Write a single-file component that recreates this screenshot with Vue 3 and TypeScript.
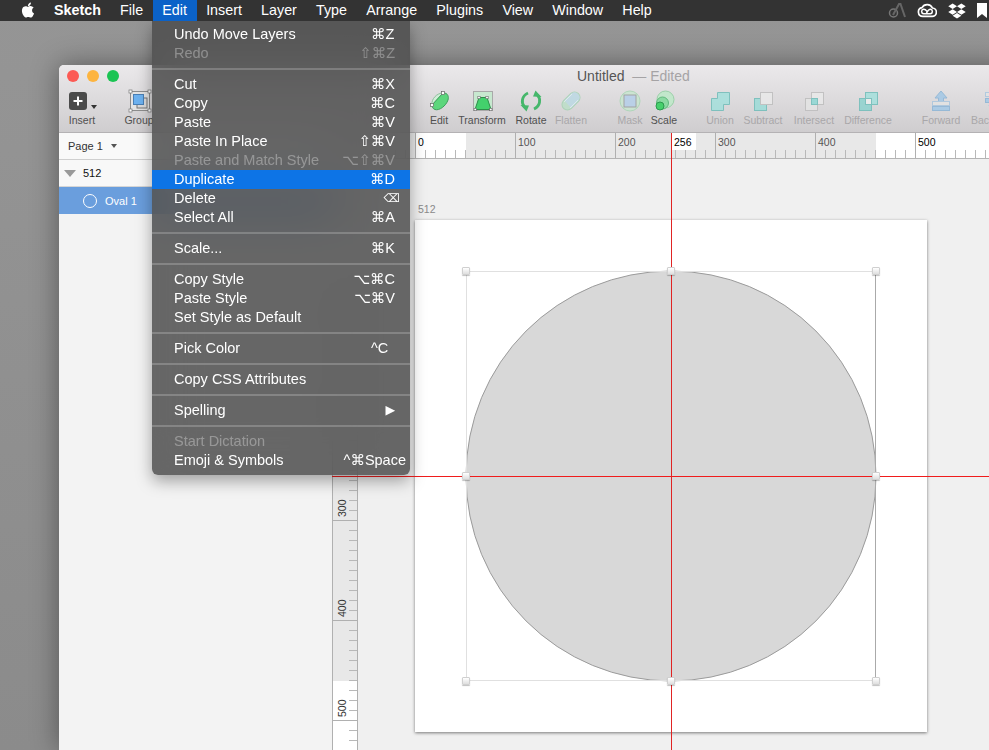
<template>
  <div class="desktop">
    <!-- window sits behind the menu bar, cut off by the right edge -->
    <div class="window">
      <div class="toolbar">
        <div class="titlebar">
          <span class="light red"></span>
          <span class="light yellow"></span>
          <span class="light green"></span>
          <div class="title">Untitled <span class="edited">&nbsp;—&nbsp;Edited</span></div>
        </div>
        <div class="tools">
          <div
            v-for="t in tools"
            :key="t.label"
            class="tool"
            :class="{ off: t.off }"
            :style="{ width: t.w + 'px', marginLeft: (t.ml || 0) + 'px' }"
          >
            <svg class="tool-icon" width="22" height="22" viewBox="0 0 22 22">
              <template v-if="t.icon === 'insert'">
                <rect x="-2" y="2" width="18" height="18" rx="3" fill="#4b4b4b" />
                <path d="M7 6.500v9M2.500 11h9" stroke="#fff" stroke-width="2" />
              </template>
              <template v-else-if="t.icon === 'group'">
                <rect x="2.500" y="1.500" width="19" height="19" fill="#e4e4e4" stroke="#8d8d8d" />
                <rect x="9" y="8" width="10" height="10" fill="#dcdcdc" stroke="#777" />
                <rect x="5.500" y="4.500" width="10" height="10" fill="#6db2f0" stroke="#4a7fb5" />
                <g fill="#fff" stroke="#777" stroke-width=".7">
                  <rect x="1" y="0" width="3" height="3" />
                  <rect x="20" y="0" width="3" height="3" />
                  <rect x="1" y="19" width="3" height="3" />
                  <rect x="20" y="19" width="3" height="3" />
                </g>
              </template>
              <template v-else-if="t.icon === 'edit'">
                <path d="M4 15C3 9 9 3 15 3z" fill="#cfeed7" stroke="#8fbf9c" />
                <path d="M4 15 15 3c5-.5 6 4 5 7-2 6-9 11-13 9.500-2-.5-3-2.500-3-4.500z" fill="#5cd67c" stroke="#3d9f5b" />
                <rect x="2.500" y="13.500" width="3" height="3" fill="#fff" stroke="#666" stroke-width=".7" />
                <rect x="13.500" y="1.500" width="3" height="3" fill="#fff" stroke="#666" stroke-width=".7" />
              </template>
              <template v-else-if="t.icon === 'transform'">
                <rect x="2.500" y="1.500" width="19" height="19" fill="#c7e8cf" stroke="#a9a9a9" />
                <path d="M8 7.500h8l4 12H4z" fill="#43d16c" stroke="#2c8f48" />
                <g fill="#fff" stroke="#666" stroke-width=".6">
                  <rect x="6.800" y="6.300" width="2.400" height="2.400" />
                  <rect x="14.800" y="6.300" width="2.400" height="2.400" />
                  <rect x="3" y="18.300" width="2.400" height="2.400" />
                  <rect x="18.600" y="18.300" width="2.400" height="2.400" />
                </g>
              </template>
              <template v-else-if="t.icon === 'rotate'">
                <g fill="none" stroke="#46b76b" stroke-width="2.800">
                  <path d="M8 3C1.500 6 1 13 4.500 17" />
                  <path d="M14 19c6.500-3 7-10 3.500-14" />
                </g>
                <path d="M.5 15 9 15.500 6.500 21.500zM21.500 7 13 6.500 15.500.5z" fill="#46b76b" />
              </template>
              <template v-else-if="t.icon === 'flatten'">
                <rect x="0.500" y="5.500" width="21" height="11" rx="5.500" fill="#bcdfc8" stroke="#a6d2b3" transform="rotate(-45 11 11)" />
                <path d="M4.500 10.500 11.500 3.500a5 5 0 0 1 7 7L11 18z" fill="#bcd9e4" />
                <path d="M4 12 12 4M10 18l8-8" stroke="#fff" stroke-opacity=".5" />
              </template>
              <template v-else-if="t.icon === 'mask'">
                <circle cx="11" cy="11" r="10" fill="#c9e6d0" stroke="#a9d6b5" />
                <rect x="5" y="5" width="12" height="12" fill="#b5cfea" stroke="#999" />
              </template>
              <template v-else-if="t.icon === 'scale'">
                <circle cx="12.500" cy="9.500" r="8.500" fill="#c2e7cb" stroke="#9bd0a9" />
                <circle cx="9.500" cy="13" r="6" fill="#8bdaa2" stroke="#60b87c" />
                <circle cx="7" cy="16" r="4" fill="#46d06c" stroke="#2c9a4e" />
              </template>
              <template v-else-if="t.icon === 'union'">
                <path d="M8.500 2.500h12v12h-6v6h-12v-12h6z" fill="#a4e0dc" stroke="#6fbdb9" />
              </template>
              <template v-else-if="t.icon === 'subtract'">
                <rect x="2.500" y="8.500" width="12" height="12" fill="#9cdcd8" stroke="#6fbdb9" />
                <rect x="8.500" y="2.500" width="12" height="12" fill="#e9e9e9" stroke="#bdbdbd" />
              </template>
              <template v-else-if="t.icon === 'intersect'">
                <rect x="2.500" y="8.500" width="12" height="12" fill="#e4e4e4" stroke="#bdbdbd" />
                <rect x="8.500" y="2.500" width="12" height="12" fill="#e9e9e9" stroke="#bdbdbd" />
                <rect x="8.500" y="8.500" width="6" height="6" fill="#8fd8d4" stroke="#6fbdb9" />
              </template>
              <template v-else-if="t.icon === 'difference'">
                <rect x="2.500" y="8.500" width="12" height="12" fill="#8fd3cf" stroke="#6fbdb9" />
                <rect x="8.500" y="2.500" width="12" height="12" fill="#a4e0dc" stroke="#6fbdb9" />
                <rect x="8.500" y="8.500" width="6" height="6" fill="#eee" stroke="#6fbdb9" />
              </template>
              <template v-else-if="t.icon === 'forward'">
                <path d="M11 1 5 8h3.500v4h5V8H17z" fill="#a3c8e6" stroke="#8bb4d6" />
                <rect x="2.500" y="11.500" width="17" height="4" fill="#e3e3e3" stroke="#a9c6de" />
                <rect x="2.500" y="16.500" width="17" height="4" fill="#a3c8e6" stroke="#8bb4d6" />
              </template>
              <template v-else>
                <rect x="2.500" y="2.500" width="17" height="4" fill="#e3e3e3" stroke="#a9c6de" />
                <rect x="2.500" y="8.500" width="17" height="4" fill="#a3c8e6" stroke="#8bb4d6" />
                <path d="M11 21l6-6H5z" fill="#a3c8e6" />
              </template>
            </svg>
            <span v-if="t.icon === 'insert'" class="caret"></span>
            <span class="tool-label">{{ t.label }}</span>
          </div>
        </div>
      </div>

      <div class="body">
        <aside class="sidebar">
          <div class="page-row">Page 1 <span class="page-caret"></span></div>
          <div class="layer-group"><span class="disclosure"></span>512</div>
          <div class="layer-row"><span class="oval-glyph"></span>Oval 1</div>
        </aside>

        <main class="main">
          <div class="h-ruler">
            <span class="h-white" style="left: 83px; width: 51px"></span>
            <span class="h-white" style="left: 544px; width: 120px"></span>
            <span class="h-white short" style="left: 339px; width: 25px"></span>
            <span
              v-for="v in hTicks"
              :key="v"
              class="h-tick"
              :class="{ major: v % 100 === 0 }"
              :style="{ left: 83 + v + 'px' }"
            ></span>
            <span
              v-for="l in hLabels"
              :key="l.text"
              class="h-label"
              :class="{ dark: l.dark }"
              :style="{ left: 83 + l.v + 3 + 'px' }"
            >{{ l.text }}</span>
          </div>
          <div class="canvas-row">
            <div class="v-ruler">
              <span class="v-white" style="top: 61px; height: 51px"></span>
              <span class="v-white" style="top: 522px; height: 80px"></span>
              <span
                v-for="v in vTicks"
                :key="v"
                class="v-tick"
                :class="{ major: v % 100 === 0 }"
                :style="{ top: 61 + v + 'px' }"
              ></span>
              <span
                v-for="v in vLabels"
                :key="v"
                class="v-label"
                :style="{ top: 61 + v - 3 + 'px' }"
              >{{ v }}</span>
            </div>
            <div class="canvas">
              <div class="artboard-name">512</div>
              <div class="artboard">
                <svg class="oval" width="512" height="512" viewBox="0 0 512 512">
                  <circle cx="256" cy="256" r="205" fill="#d8d8d8" stroke="#9b9b9b" />
                </svg>
                <div class="selection"></div>
                <span
                  v-for="h in handles"
                  :key="h.x + '-' + h.y"
                  class="handle"
                  :style="{ left: h.x - 4 + 'px', top: h.y - 4 + 'px' }"
                ></span>
              </div>
            </div>
          </div>
          <div class="guide-h"></div>
          <div class="guide-v"></div>
        </main>
      </div>
    </div>

    <header class="menubar">
      <svg class="apple" width="18" height="18" viewBox="0 0 24 24">
        <path fill="#fff" d="M18.71 19.5c-.83 1.24-1.71 2.45-3.05 2.47-1.34.03-1.77-.79-3.29-.79-1.53 0-2 .77-3.27.82-1.31.05-2.3-1.32-3.14-2.53C4.25 17 2.94 12.45 4.7 9.39c.87-1.52 2.43-2.48 4.12-2.51 1.28-.02 2.5.87 3.29.87.78 0 2.26-1.07 3.81-.91.65.03 2.47.26 3.64 1.98-.09.06-2.17 1.28-2.15 3.81.03 3.02 2.65 4.03 2.68 4.04-.03.07-.42 1.44-1.38 2.83M13 3.500c.73-.83 1.94-1.46 2.94-1.5.13 1.17-.34 2.35-1.04 3.19-.69.85-1.83 1.51-2.95 1.42-.15-1.15.41-2.35 1.05-3.11z" />
      </svg>
      <span
        v-for="m in menus"
        :key="m"
        class="menu-title"
        :class="{ app: m === 'Sketch', active: m === 'Edit' }"
      >{{ m }}</span>
      <div class="status">
        <svg width="18" height="15" viewBox="0 0 18 15">
          <circle cx="5.500" cy="10" r="4" fill="none" stroke="#777" stroke-width="1.500" />
          <path d="M5 12 11 1h1.500L17 14" fill="none" stroke="#666" stroke-width="2" />
        </svg>
        <svg width="20" height="15" viewBox="0 0 24 17">
          <path d="M7 15.500a5.300 5.300 0 0 1-1-10.500A7 7 0 0 1 18.500 5.500 5 5 0 0 1 18 15.500z" fill="none" stroke="#fff" stroke-width="2" />
          <path d="M12 9.500c-1.500-2-3-2.800-4.300-2.500a2.800 2.800 0 0 0 .3 5.500h8a2.800 2.800 0 0 0 .3-5.500c-2-.3-3.500 2-5 4.500" fill="none" stroke="#fff" stroke-width="1.800" />
        </svg>
        <svg width="18" height="16" viewBox="0 0 24 22">
          <path fill="#fff" d="M6 .8 0 4.600l6 3.800 6-3.800zM18 .8l-6 3.800 6 3.800 6-3.800zM0 12.300l6 3.800 6-3.800-6-3.800zM18 8.500l-6 3.800 6 3.800 6-3.800zM6 17.400l6 3.800 6-3.800-6-3.800z" />
        </svg>
        <svg class="mark" width="10" height="15" viewBox="0 0 10 15">
          <path fill="#fff" d="M0 0h10v15L5 11l-5 4z" />
        </svg>
      </div>
    </header>

    <!-- Edit menu, frosted over whatever sits behind it -->
    <div class="menu">
      <template v-for="(item, i) in editMenu" :key="i">
        <div v-if="item.sep" class="sep"></div>
        <div
          v-else
          class="item"
          :class="{ off: item.off, hot: item.hot, wide: item.wide }"
        >
          <span>{{ item.label }}</span>
          <span class="keys" :class="item.glyph">{{ item.keys }}</span>
        </div>
      </template>
    </div>
  </div>
</template>

<script setup lang="ts">
interface Tool { label: string; icon: string; w: number; ml?: number; off?: boolean }
interface MenuItem { label?: string; keys?: string; off?: boolean; hot?: boolean; wide?: boolean; sep?: boolean; glyph?: string }

const menus = ['Sketch', 'File', 'Edit', 'Insert', 'Layer', 'Type', 'Arrange', 'Plugins', 'View', 'Window', 'Help']

const tools: Tool[] = [
  { label: 'Insert', icon: 'insert', w: 40, ml: 3 },
  { label: 'Group', icon: 'group', w: 42, ml: 16 },
  { label: 'Edit', icon: 'edit', w: 28, ml: 265 },
  { label: 'Transform', icon: 'transform', w: 58 },
  { label: 'Rotate', icon: 'rotate', w: 40 },
  { label: 'Flatten', icon: 'flatten', w: 40, off: true },
  { label: 'Mask', icon: 'mask', w: 36, ml: 21, off: true },
  { label: 'Scale', icon: 'scale', w: 32 },
  { label: 'Union', icon: 'union', w: 40, ml: 20, off: true },
  { label: 'Subtract', icon: 'subtract', w: 46, off: true },
  { label: 'Intersect', icon: 'intersect', w: 56, off: true },
  { label: 'Difference', icon: 'difference', w: 52, off: true },
  { label: 'Forward', icon: 'forward', w: 52, ml: 21, off: true },
  { label: 'Backward', icon: 'backward', w: 54, off: true },
]

const editMenu: MenuItem[] = [
  { label: 'Undo Move Layers', keys: '⌘Z' },
  { label: 'Redo', keys: '⇧⌘Z', off: true },
  { sep: true },
  { label: 'Cut', keys: '⌘X' },
  { label: 'Copy', keys: '⌘C' },
  { label: 'Paste', keys: '⌘V' },
  { label: 'Paste In Place', keys: '⇧⌘V' },
  { label: 'Paste and Match Style', keys: '⌥⇧⌘V', off: true },
  { label: 'Duplicate', keys: '⌘D', hot: true },
  { label: 'Delete', keys: '⌫', glyph: 'del' },
  { label: 'Select All', keys: '⌘A' },
  { sep: true },
  { label: 'Scale...', keys: '⌘K' },
  { sep: true },
  { label: 'Copy Style', keys: '⌥⌘C' },
  { label: 'Paste Style', keys: '⌥⌘V' },
  { label: 'Set Style as Default' },
  { sep: true },
  { label: 'Pick Color', keys: '^C' },
  { sep: true },
  { label: 'Copy CSS Attributes' },
  { sep: true },
  { label: 'Spelling', keys: '▶', glyph: 'arrow' },
  { sep: true },
  { label: 'Start Dictation', off: true },
  { label: 'Emoji & Symbols', keys: '^⌘Space', wide: true },
]

const range = (from: number, to: number) => {
  const out: number[] = []
  for (let v = from; v <= to; v += 10) out.push(v)
  return out
}

const hTicks = range(-80, 570)
const vTicks = range(-60, 530)
const vLabels = [0, 100, 200, 300, 400, 500]
const hLabels = [
  { v: 0, text: '0', dark: true },
  { v: 100, text: '100' },
  { v: 200, text: '200' },
  { v: 256, text: '256', dark: true },
  { v: 300, text: '300' },
  { v: 400, text: '400' },
  { v: 500, text: '500', dark: true },
]

// selection handles, in artboard coordinates
const handles = [51, 256, 461].flatMap((y) =>
  [51, 256, 461].filter((x) => !(x === 256 && y === 256)).map((x) => ({ x, y }))
)
</script>

<style>
html,
body {
  margin: 0;
  overflow: hidden;
}
</style>

<style scoped>
.desktop {
  position: relative;
  width: 989px;
  height: 750px;
  overflow: hidden;
  background: linear-gradient(180deg, #959595, #8b8b8b);
  font-family: "Liberation Sans", "DejaVu Sans", sans-serif;
}

/* menu bar */
.menubar {
  position: absolute;
  z-index: 5;
  top: 0;
  left: 0;
  right: 0;
  height: 21px;
  display: flex;
  align-items: center;
  background: #333;
  color: #fff;
  font-size: 14.3px;
}
.apple {
  margin: -1px 7.400px 0 19px;
}
.menu-title {
  height: 21px;
  line-height: 21px;
  padding: 0 9.600px;
}
.menu-title.app {
  font-weight: 700;
}
.menu-title.active {
  background: #0b62c8;
}
.status {
  margin-left: auto;
  display: flex;
  align-items: center;
  gap: 11px;
  padding-right: 2px;
}
.status svg {
  display: block;
}

/* edit menu */
.menu {
  position: absolute;
  z-index: 4;
  top: 21px;
  left: 152px;
  width: 258px;
  height: 454px;
  box-sizing: border-box;
  padding-top: 4px;
  border-radius: 0 0 6px 6px;
  background: rgba(75, 75, 75, 0.84);
  backdrop-filter: blur(24px);
  box-shadow: 0 6px 16px rgba(0, 0, 0, 0.35);
  color: #fff;
  font-size: 14.5px;
}
.item {
  height: 19px;
  line-height: 19px;
  display: flex;
  justify-content: space-between;
  padding: 0 15px 0 22px;
  white-space: nowrap;
}
.item.wide {
  padding-right: 4px;
}
.item.off {
  color: rgba(255, 255, 255, 0.32);
}
.item.hot {
  background: #0d74e6;
}
.keys {
  min-width: 24px;
  text-align: left;
}
.keys.del {
  min-width: 0;
  margin-right: -5px;
  font-size: 11.500px;
}
.keys.arrow {
  min-width: 0;
  font-size: 12.500px;
}
.sep {
  height: 2px;
  margin: 5px 0;
  background: rgba(255, 255, 255, 0.2);
}

/* window */
.window {
  position: absolute;
  top: 65px;
  left: 59px;
  width: 960px;
  bottom: 0;
  border-radius: 5px 5px 0 0;
  overflow: hidden;
  box-shadow: 0 0 28px rgba(0, 0, 0, 0.4);
  display: flex;
  flex-direction: column;
  background: #f0f0f0;
}
.toolbar {
  height: 68px;
  box-sizing: border-box;
  border-bottom: 1px solid #b4b2b4;
  background: linear-gradient(180deg, #ebe9eb, #cfcdcf);
}
.titlebar {
  height: 22px;
  display: flex;
  align-items: center;
  gap: 8px;
  padding-left: 8px;
}
.light {
  width: 12px;
  height: 12px;
  border-radius: 50%;
}
.red {
  background: #fc5a54;
}
.yellow {
  background: #fdb43f;
}
.green {
  background: #1bc453;
}
.title {
  margin-left: 450px;
  font-size: 14px;
  color: #555;
}
.edited {
  color: #a5a3a5;
}
.tools {
  display: flex;
  padding-top: 3px;
}
.tool {
  position: relative;
  flex: none;
  display: flex;
  flex-direction: column;
  align-items: center;
  color: #505050;
}
.tool.off {
  color: #a9a7a9;
}
.tool-icon {
  display: block;
  overflow: visible;
}
.tool.off .tool-icon {
  opacity: 0.85;
}
.tool-label {
  margin-top: 2px;
  font-size: 10.500px;
  line-height: 13px;
  white-space: nowrap;
}
.caret {
  position: absolute;
  left: 29px;
  top: 15px;
  border: 3px solid transparent;
  border-top: 4px solid #333;
  border-bottom: 0;
}

.body {
  flex: 1;
  display: flex;
  min-height: 0;
}

/* layer list */
.sidebar {
  flex: none;
  width: 273px;
  background: #f3f3f3;
  font-size: 11px;
}
.page-row {
  height: 26px;
  display: flex;
  align-items: center;
  padding-left: 9px;
  background: #f9f9f9;
  border-bottom: 1px solid #cfcfcf;
  color: #333;
}
.page-caret {
  margin-left: 8px;
  border: 3px solid transparent;
  border-top: 4px solid #555;
  border-bottom: 0;
}
.layer-group {
  height: 27px;
  box-sizing: border-box;
  display: flex;
  align-items: center;
  padding-left: 5px;
  background: #f8f8f8;
  border-bottom: 1px solid #d6d6d6;
  color: #111;
}
.disclosure {
  margin-right: 7px;
  border-left: 6px solid transparent;
  border-right: 6px solid transparent;
  border-top: 7px solid #9a9a9a;
}
.layer-row {
  height: 27px;
  display: flex;
  align-items: center;
  padding-left: 24px;
  background: #6a9edd;
  color: #fff;
}
.oval-glyph {
  width: 12px;
  height: 12px;
  margin-right: 8px;
  border: 1px solid #fff;
  border-radius: 50%;
}

/* rulers and canvas */
.main {
  position: relative;
  flex: 1;
  min-width: 0;
  display: flex;
  flex-direction: column;
}
.h-ruler {
  position: relative;
  flex: none;
  height: 26px;
  box-sizing: border-box;
  border-bottom: 1px solid #b4b4b4;
  background: #e8e8e8;
  overflow: hidden;
}
.h-white {
  position: absolute;
  top: 0;
  bottom: 0;
  background: #fff;
}
.h-white.short {
  bottom: 8px;
}
.h-tick {
  position: absolute;
  bottom: 0;
  width: 1px;
  height: 8px;
  background: #b8b8b8;
}
.h-tick.major {
  height: 26px;
  background: #b0b0b0;
}
.h-label {
  position: absolute;
  top: 3px;
  font-size: 10.500px;
  line-height: 12px;
  color: #555;
}
.h-label.dark {
  color: #000;
}
.canvas-row {
  flex: 1;
  display: flex;
  min-height: 0;
}
.v-ruler {
  position: relative;
  flex: none;
  width: 26px;
  box-sizing: border-box;
  border-left: 1px solid #b0b0b0;
  border-right: 1px solid #b0b0b0;
  background: #e8e8e8;
  overflow: hidden;
}
.v-white {
  position: absolute;
  left: 0;
  right: 0;
  background: #fff;
}
.v-tick {
  position: absolute;
  right: 0;
  width: 8px;
  height: 1px;
  background: #b8b8b8;
}
.v-tick.major {
  width: 26px;
  background: #b0b0b0;
}
.v-label {
  position: absolute;
  left: 3px;
  writing-mode: vertical-rl;
  transform: translateY(-100%) rotate(180deg);
  font-size: 10.500px;
  line-height: 12px;
  color: #333;
}
.canvas {
  position: relative;
  flex: 1;
  background: #f0f0f0;
}
.artboard-name {
  position: absolute;
  left: 60px;
  top: 44px;
  font-size: 10.500px;
  color: #8a8a8a;
}
.artboard {
  position: absolute;
  left: 57px;
  top: 61px;
  width: 512px;
  height: 512px;
  background: #fff;
  box-shadow: 0 1px 3px rgba(0, 0, 0, 0.5);
}
.oval {
  position: absolute;
  inset: 0;
}
.selection {
  position: absolute;
  left: 51px;
  top: 51px;
  width: 410px;
  height: 410px;
  box-sizing: border-box;
  border: 1px solid #e0e0e0;
  border-right-color: #aaa;
}
.handle {
  position: absolute;
  z-index: 1;
  width: 8px;
  height: 8px;
  box-sizing: border-box;
  border: 1px solid #d0d0d0;
  border-radius: 1px;
  background: linear-gradient(180deg, #fff, #dedede);
  box-shadow: 0 1px 1px rgba(0, 0, 0, 0.25);
}
.guide-h {
  position: absolute;
  left: 0;
  right: 0;
  top: 343px;
  height: 1px;
  background: #f01c1c;
}
.guide-v {
  position: absolute;
  top: 0;
  bottom: 0;
  left: 339px;
  width: 1px;
  background: #e02424;
}
</style>
